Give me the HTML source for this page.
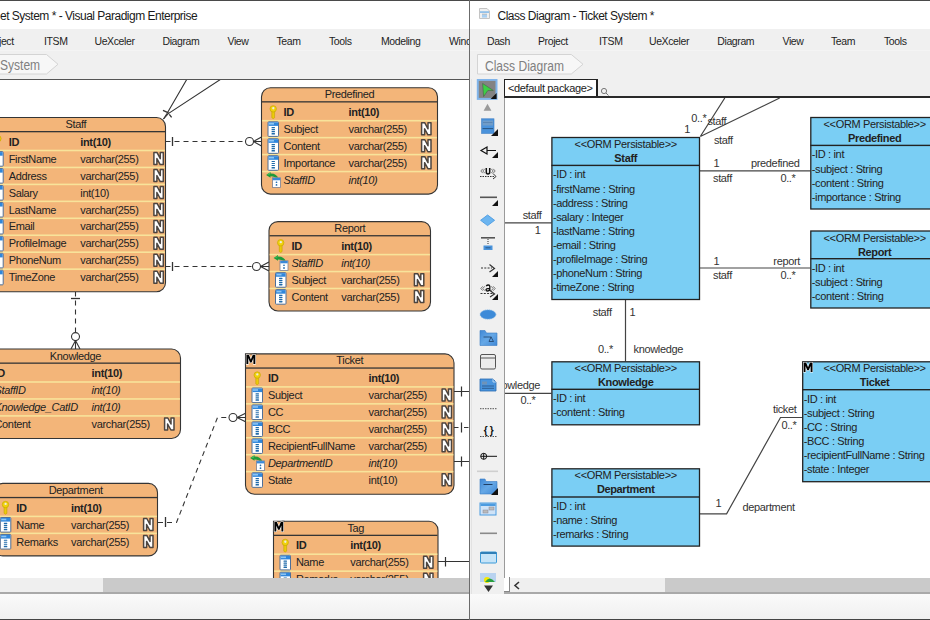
<!DOCTYPE html>
<html><head><meta charset="utf-8"><style>
html,body{margin:0;padding:0;}
body{width:930px;height:620px;overflow:hidden;position:relative;background:#fff;font-family:"Liberation Sans", sans-serif;}
.a{position:absolute;}
.mi{position:absolute;top:34.5px;font-size:10.5px;letter-spacing:-0.4px;color:#1e1e1e;white-space:nowrap;}
svg text{font-family:"Liberation Sans", sans-serif;letter-spacing:-0.35px;}
</style></head><body>

<div class="a" style="left:0;top:0;width:930px;height:1px;background:#4a4a4a"></div>
<div class="a" style="left:0;top:1px;width:469px;height:28px;background:#fff"></div>
<div class="a" style="left:0;top:8.5px;font-size:12px;letter-spacing:-0.5px;color:#1a1a1a;white-space:nowrap">et System * - Visual Paradigm Enterprise</div>
<div class="a" style="left:0;top:29px;width:469px;height:50px;background:#f0f0f0"></div>
<div class="a" style="left:0;top:50px;width:469px;height:1px;background:#f4f4f4"></div>
<div class="mi" style="left:-1px">ject</div>
<div class="mi" style="left:44px">ITSM</div>
<div class="mi" style="left:94.5px">UeXceler</div>
<div class="mi" style="left:162.5px">Diagram</div>
<div class="mi" style="left:227.5px">View</div>
<div class="mi" style="left:276.5px">Team</div>
<div class="mi" style="left:329px">Tools</div>
<div class="mi" style="left:381px">Modeling</div>
<div class="mi" style="left:449px">Window</div>
<svg class="a" style="left:0;top:50px" width="70" height="30"><path d="M-10 4.5 H46.5 L58 14.25 L46.5 24 H-10 Z" fill="#f7f7f7" stroke="#d4d4d4" stroke-width="1"/></svg>
<div class="a" style="left:-0.5px;top:56.5px;font-size:14px;color:#808080;white-space:nowrap;transform:scaleX(0.86);transform-origin:0 0">System</div>
<div class="a" style="left:0;top:79px;width:469px;height:1px;background:#555"></div>
<div class="a" style="left:0;top:578px;width:469px;height:15px;background:#efefef"></div>
<div class="a" style="left:103px;top:578px;width:366px;height:15px;background:#cacaca"></div>
<div class="a" style="left:0;top:592px;width:469px;height:2px;background:#a9a9a9"></div>
<div class="a" style="left:0;top:594px;width:930px;height:25px;background:linear-gradient(#fafafa,#f0f0f0)"></div>
<div class="a" style="left:0;top:619px;width:930px;height:1px;background:#444"></div>
<svg class="a" style="left:0;top:80px" width="469" height="498" viewBox="0 80 469 498">
<g stroke="#333" stroke-width="1.1" fill="none">
<path d="M187 79 L167 113.5 L163.5 119"/><path d="M221.1 79 L168.3 113.6 L163.5 119"/>
<path d="M163 110.3 L168.5 112.8 M169.3 114.3 L171.6 117.4" stroke-width="1.3"/>
<path d="M165.5 141.5 H245.5" stroke-dasharray="5 4"/>
<path d="M172.5 137 V146" stroke-width="1.3"/>
<circle cx="249.5" cy="141.5" r="4" fill="#fff"/>
<path d="M253.5 141.5 L261.5 137 M253.5 141.5 L261.5 146 M253.5 141.5 H261.5"/>
<path d="M165.5 266.5 H252.5" stroke-dasharray="5 4"/>
<path d="M172.5 262 V271" stroke-width="1.3"/>
<circle cx="256.5" cy="266.5" r="4" fill="#fff"/>
<path d="M260.5 266.5 L269 262 M260.5 266.5 L269 271 M260.5 266.5 H269"/>
<path d="M75.5 291.5 V332.5" stroke-dasharray="5 4"/>
<path d="M71 298.5 H80" stroke-width="1.3"/>
<circle cx="75.5" cy="336.6" r="4" fill="#fff"/>
<path d="M75.5 340.6 L71 349 M75.5 340.6 L80 349 M75.5 340.6 V349"/>
<path d="M158 522.5 H176.5 L217.5 417.5 H229" stroke-dasharray="5 4"/>
<path d="M165.5 517 V527" stroke-width="1.3"/>
<circle cx="233" cy="417.5" r="4" fill="#fff"/>
<path d="M237 417.5 L245.5 413.2 M237 417.5 L245.5 421.8 M237 417.5 H245.5"/>
<path d="M454 391.5 H470 M461.5 386.5 V396.5" stroke-width="1.2"/>
<path d="M454 427.5 H458.5 M464 427.5 H468.5 M461.5 422.5 V432.5" stroke-width="1.2"/>
<path d="M454 461.5 H470 M461.5 456.5 V466.5" stroke-width="1.2"/>
<path d="M438 561.5 H470 M445.5 557 V566.5" stroke-width="1.2"/>
</g>
<rect x="-13.8" y="117.5" width="179.3" height="174.20000000000005" rx="9" ry="9" fill="#F3B579" stroke="#353535" stroke-width="1.1"/>
<rect x="-13.3" y="131.0" width="178.3" height="1.3" fill="#353535"/>
<rect x="-13.200000000000001" y="149.7" width="178.10000000000002" height="1.6" fill="#F8E39A"/>
<rect x="-13.200000000000001" y="166.64999999999998" width="178.10000000000002" height="1.6" fill="#F8E39A"/>
<rect x="-13.200000000000001" y="183.6" width="178.10000000000002" height="1.6" fill="#F8E39A"/>
<rect x="-13.200000000000001" y="200.54999999999998" width="178.10000000000002" height="1.6" fill="#F8E39A"/>
<rect x="-13.200000000000001" y="217.5" width="178.10000000000002" height="1.6" fill="#F8E39A"/>
<rect x="-13.200000000000001" y="234.45" width="178.10000000000002" height="1.6" fill="#F8E39A"/>
<rect x="-13.200000000000001" y="251.39999999999998" width="178.10000000000002" height="1.6" fill="#F8E39A"/>
<rect x="-13.200000000000001" y="268.34999999999997" width="178.10000000000002" height="1.6" fill="#F8E39A"/>
<text x="75.85" y="128.0" text-anchor="middle" font-size="11" fill="#222">Staff</text>
<g transform="translate(-5.600000000000001,135.05)"><path d="M2.1 6 V12.4 Q3.5 14.3 4.9 12.4 V6 Z" fill="#EBCB0A" stroke="#C4A000" stroke-width="0.6"/><circle cx="3.5" cy="3.6" r="3.2" fill="#F0D20E" stroke="#C9A800" stroke-width="0.7"/><circle cx="3.6" cy="3.0" r="1.15" fill="#ECECE4"/></g>
<text x="8.7" y="145.7" font-size="11" fill="#222" font-weight="bold">ID</text>
<text x="80.3" y="145.7" font-size="11" fill="#222" font-weight="bold">int(10)</text>
<g transform="translate(-7.800000000000001,151.1)"><rect x="0.5" y="0.5" width="10.5" height="14.6" rx="0.8" fill="#fff" stroke="#4f6f98" stroke-width="1"/><rect x="1" y="1" width="9.5" height="3.6" fill="#2f86db"/><rect x="1.5" y="1.7" width="5" height="1.6" fill="#8cc4f2"/><rect x="4" y="5.7" width="3.5" height="1.2" rx="0.5" fill="#1f6aaa"/><rect x="4" y="7.7" width="3.5" height="1.2" rx="0.5" fill="#1f6aaa"/><rect x="4" y="9.7" width="3.5" height="1.2" rx="0.5" fill="#1f6aaa"/><rect x="4" y="11.7" width="3.5" height="1.6" rx="0.6" fill="#1f6aaa"/></g>
<text x="8.7" y="162.64999999999998" font-size="11" fill="#222">FirstName</text>
<text x="80.3" y="162.64999999999998" font-size="11" fill="#222">varchar(255)</text>
<g transform="translate(153.0,151.7)"><path d="M0.9 12.9 V0.9 H4.1 L7.3 6.9 V0.9 H10.3 V12.9 H7.2 L3.9 6.9 V12.9 Z" fill="#fff" stroke="#4d4540" stroke-width="1.5" stroke-linejoin="round"/></g>
<g transform="translate(-7.800000000000001,168.05)"><rect x="0.5" y="0.5" width="10.5" height="14.6" rx="0.8" fill="#fff" stroke="#4f6f98" stroke-width="1"/><rect x="1" y="1" width="9.5" height="3.6" fill="#2f86db"/><rect x="1.5" y="1.7" width="5" height="1.6" fill="#8cc4f2"/><rect x="4" y="5.7" width="3.5" height="1.2" rx="0.5" fill="#1f6aaa"/><rect x="4" y="7.7" width="3.5" height="1.2" rx="0.5" fill="#1f6aaa"/><rect x="4" y="9.7" width="3.5" height="1.2" rx="0.5" fill="#1f6aaa"/><rect x="4" y="11.7" width="3.5" height="1.6" rx="0.6" fill="#1f6aaa"/></g>
<text x="8.7" y="179.6" font-size="11" fill="#222">Address</text>
<text x="80.3" y="179.6" font-size="11" fill="#222">varchar(255)</text>
<g transform="translate(153.0,168.65)"><path d="M0.9 12.9 V0.9 H4.1 L7.3 6.9 V0.9 H10.3 V12.9 H7.2 L3.9 6.9 V12.9 Z" fill="#fff" stroke="#4d4540" stroke-width="1.5" stroke-linejoin="round"/></g>
<g transform="translate(-7.800000000000001,185.0)"><rect x="0.5" y="0.5" width="10.5" height="14.6" rx="0.8" fill="#fff" stroke="#4f6f98" stroke-width="1"/><rect x="1" y="1" width="9.5" height="3.6" fill="#2f86db"/><rect x="1.5" y="1.7" width="5" height="1.6" fill="#8cc4f2"/><rect x="4" y="5.7" width="3.5" height="1.2" rx="0.5" fill="#1f6aaa"/><rect x="4" y="7.7" width="3.5" height="1.2" rx="0.5" fill="#1f6aaa"/><rect x="4" y="9.7" width="3.5" height="1.2" rx="0.5" fill="#1f6aaa"/><rect x="4" y="11.7" width="3.5" height="1.6" rx="0.6" fill="#1f6aaa"/></g>
<text x="8.7" y="196.54999999999998" font-size="11" fill="#222">Salary</text>
<text x="80.3" y="196.54999999999998" font-size="11" fill="#222">int(10)</text>
<g transform="translate(153.0,185.6)"><path d="M0.9 12.9 V0.9 H4.1 L7.3 6.9 V0.9 H10.3 V12.9 H7.2 L3.9 6.9 V12.9 Z" fill="#fff" stroke="#4d4540" stroke-width="1.5" stroke-linejoin="round"/></g>
<g transform="translate(-7.800000000000001,201.95000000000002)"><rect x="0.5" y="0.5" width="10.5" height="14.6" rx="0.8" fill="#fff" stroke="#4f6f98" stroke-width="1"/><rect x="1" y="1" width="9.5" height="3.6" fill="#2f86db"/><rect x="1.5" y="1.7" width="5" height="1.6" fill="#8cc4f2"/><rect x="4" y="5.7" width="3.5" height="1.2" rx="0.5" fill="#1f6aaa"/><rect x="4" y="7.7" width="3.5" height="1.2" rx="0.5" fill="#1f6aaa"/><rect x="4" y="9.7" width="3.5" height="1.2" rx="0.5" fill="#1f6aaa"/><rect x="4" y="11.7" width="3.5" height="1.6" rx="0.6" fill="#1f6aaa"/></g>
<text x="8.7" y="213.5" font-size="11" fill="#222">LastName</text>
<text x="80.3" y="213.5" font-size="11" fill="#222">varchar(255)</text>
<g transform="translate(153.0,202.55)"><path d="M0.9 12.9 V0.9 H4.1 L7.3 6.9 V0.9 H10.3 V12.9 H7.2 L3.9 6.9 V12.9 Z" fill="#fff" stroke="#4d4540" stroke-width="1.5" stroke-linejoin="round"/></g>
<g transform="translate(-7.800000000000001,218.9)"><rect x="0.5" y="0.5" width="10.5" height="14.6" rx="0.8" fill="#fff" stroke="#4f6f98" stroke-width="1"/><rect x="1" y="1" width="9.5" height="3.6" fill="#2f86db"/><rect x="1.5" y="1.7" width="5" height="1.6" fill="#8cc4f2"/><rect x="4" y="5.7" width="3.5" height="1.2" rx="0.5" fill="#1f6aaa"/><rect x="4" y="7.7" width="3.5" height="1.2" rx="0.5" fill="#1f6aaa"/><rect x="4" y="9.7" width="3.5" height="1.2" rx="0.5" fill="#1f6aaa"/><rect x="4" y="11.7" width="3.5" height="1.6" rx="0.6" fill="#1f6aaa"/></g>
<text x="8.7" y="230.45" font-size="11" fill="#222">Email</text>
<text x="80.3" y="230.45" font-size="11" fill="#222">varchar(255)</text>
<g transform="translate(153.0,219.5)"><path d="M0.9 12.9 V0.9 H4.1 L7.3 6.9 V0.9 H10.3 V12.9 H7.2 L3.9 6.9 V12.9 Z" fill="#fff" stroke="#4d4540" stroke-width="1.5" stroke-linejoin="round"/></g>
<g transform="translate(-7.800000000000001,235.85)"><rect x="0.5" y="0.5" width="10.5" height="14.6" rx="0.8" fill="#fff" stroke="#4f6f98" stroke-width="1"/><rect x="1" y="1" width="9.5" height="3.6" fill="#2f86db"/><rect x="1.5" y="1.7" width="5" height="1.6" fill="#8cc4f2"/><rect x="4" y="5.7" width="3.5" height="1.2" rx="0.5" fill="#1f6aaa"/><rect x="4" y="7.7" width="3.5" height="1.2" rx="0.5" fill="#1f6aaa"/><rect x="4" y="9.7" width="3.5" height="1.2" rx="0.5" fill="#1f6aaa"/><rect x="4" y="11.7" width="3.5" height="1.6" rx="0.6" fill="#1f6aaa"/></g>
<text x="8.7" y="247.39999999999998" font-size="11" fill="#222">ProfileImage</text>
<text x="80.3" y="247.39999999999998" font-size="11" fill="#222">varchar(255)</text>
<g transform="translate(153.0,236.45)"><path d="M0.9 12.9 V0.9 H4.1 L7.3 6.9 V0.9 H10.3 V12.9 H7.2 L3.9 6.9 V12.9 Z" fill="#fff" stroke="#4d4540" stroke-width="1.5" stroke-linejoin="round"/></g>
<g transform="translate(-7.800000000000001,252.79999999999998)"><rect x="0.5" y="0.5" width="10.5" height="14.6" rx="0.8" fill="#fff" stroke="#4f6f98" stroke-width="1"/><rect x="1" y="1" width="9.5" height="3.6" fill="#2f86db"/><rect x="1.5" y="1.7" width="5" height="1.6" fill="#8cc4f2"/><rect x="4" y="5.7" width="3.5" height="1.2" rx="0.5" fill="#1f6aaa"/><rect x="4" y="7.7" width="3.5" height="1.2" rx="0.5" fill="#1f6aaa"/><rect x="4" y="9.7" width="3.5" height="1.2" rx="0.5" fill="#1f6aaa"/><rect x="4" y="11.7" width="3.5" height="1.6" rx="0.6" fill="#1f6aaa"/></g>
<text x="8.7" y="264.34999999999997" font-size="11" fill="#222">PhoneNum</text>
<text x="80.3" y="264.34999999999997" font-size="11" fill="#222">varchar(255)</text>
<g transform="translate(153.0,253.39999999999998)"><path d="M0.9 12.9 V0.9 H4.1 L7.3 6.9 V0.9 H10.3 V12.9 H7.2 L3.9 6.9 V12.9 Z" fill="#fff" stroke="#4d4540" stroke-width="1.5" stroke-linejoin="round"/></g>
<g transform="translate(-7.800000000000001,269.75000000000006)"><rect x="0.5" y="0.5" width="10.5" height="14.6" rx="0.8" fill="#fff" stroke="#4f6f98" stroke-width="1"/><rect x="1" y="1" width="9.5" height="3.6" fill="#2f86db"/><rect x="1.5" y="1.7" width="5" height="1.6" fill="#8cc4f2"/><rect x="4" y="5.7" width="3.5" height="1.2" rx="0.5" fill="#1f6aaa"/><rect x="4" y="7.7" width="3.5" height="1.2" rx="0.5" fill="#1f6aaa"/><rect x="4" y="9.7" width="3.5" height="1.2" rx="0.5" fill="#1f6aaa"/><rect x="4" y="11.7" width="3.5" height="1.6" rx="0.6" fill="#1f6aaa"/></g>
<text x="8.7" y="281.3" font-size="11" fill="#222">TimeZone</text>
<text x="80.3" y="281.3" font-size="11" fill="#222">varchar(255)</text>
<g transform="translate(153.0,270.35)"><path d="M0.9 12.9 V0.9 H4.1 L7.3 6.9 V0.9 H10.3 V12.9 H7.2 L3.9 6.9 V12.9 Z" fill="#fff" stroke="#4d4540" stroke-width="1.5" stroke-linejoin="round"/></g>
<rect x="261.5" y="87.7" width="176.0" height="106.39999999999999" rx="9" ry="9" fill="#F3B579" stroke="#353535" stroke-width="1.1"/>
<rect x="262.0" y="101.2" width="175.0" height="1.3" fill="#353535"/>
<rect x="262.1" y="119.9" width="174.8" height="1.6" fill="#F8E39A"/>
<rect x="262.1" y="136.85" width="174.8" height="1.6" fill="#F8E39A"/>
<rect x="262.1" y="153.79999999999998" width="174.8" height="1.6" fill="#F8E39A"/>
<rect x="262.1" y="170.75" width="174.8" height="1.6" fill="#F8E39A"/>
<text x="349.5" y="98.2" text-anchor="middle" font-size="11" fill="#222">Predefined</text>
<g transform="translate(269.7,105.25)"><path d="M2.1 6 V12.4 Q3.5 14.3 4.9 12.4 V6 Z" fill="#EBCB0A" stroke="#C4A000" stroke-width="0.6"/><circle cx="3.5" cy="3.6" r="3.2" fill="#F0D20E" stroke="#C9A800" stroke-width="0.7"/><circle cx="3.6" cy="3.0" r="1.15" fill="#ECECE4"/></g>
<text x="283.6" y="115.9" font-size="11" fill="#222" font-weight="bold">ID</text>
<text x="348.6" y="115.9" font-size="11" fill="#222" font-weight="bold">int(10)</text>
<g transform="translate(267.5,121.3)"><rect x="0.5" y="0.5" width="10.5" height="14.6" rx="0.8" fill="#fff" stroke="#4f6f98" stroke-width="1"/><rect x="1" y="1" width="9.5" height="3.6" fill="#2f86db"/><rect x="1.5" y="1.7" width="5" height="1.6" fill="#8cc4f2"/><rect x="4" y="5.7" width="3.5" height="1.2" rx="0.5" fill="#1f6aaa"/><rect x="4" y="7.7" width="3.5" height="1.2" rx="0.5" fill="#1f6aaa"/><rect x="4" y="9.7" width="3.5" height="1.2" rx="0.5" fill="#1f6aaa"/><rect x="4" y="11.7" width="3.5" height="1.6" rx="0.6" fill="#1f6aaa"/></g>
<text x="283.6" y="132.85" font-size="11" fill="#222">Subject</text>
<text x="348.6" y="132.85" font-size="11" fill="#222">varchar(255)</text>
<g transform="translate(420.7,121.9)"><path d="M0.9 12.9 V0.9 H4.1 L7.3 6.9 V0.9 H10.3 V12.9 H7.2 L3.9 6.9 V12.9 Z" fill="#fff" stroke="#4d4540" stroke-width="1.5" stroke-linejoin="round"/></g>
<g transform="translate(267.5,138.25)"><rect x="0.5" y="0.5" width="10.5" height="14.6" rx="0.8" fill="#fff" stroke="#4f6f98" stroke-width="1"/><rect x="1" y="1" width="9.5" height="3.6" fill="#2f86db"/><rect x="1.5" y="1.7" width="5" height="1.6" fill="#8cc4f2"/><rect x="4" y="5.7" width="3.5" height="1.2" rx="0.5" fill="#1f6aaa"/><rect x="4" y="7.7" width="3.5" height="1.2" rx="0.5" fill="#1f6aaa"/><rect x="4" y="9.7" width="3.5" height="1.2" rx="0.5" fill="#1f6aaa"/><rect x="4" y="11.7" width="3.5" height="1.6" rx="0.6" fill="#1f6aaa"/></g>
<text x="283.6" y="149.79999999999998" font-size="11" fill="#222">Content</text>
<text x="348.6" y="149.79999999999998" font-size="11" fill="#222">varchar(255)</text>
<g transform="translate(420.7,138.85)"><path d="M0.9 12.9 V0.9 H4.1 L7.3 6.9 V0.9 H10.3 V12.9 H7.2 L3.9 6.9 V12.9 Z" fill="#fff" stroke="#4d4540" stroke-width="1.5" stroke-linejoin="round"/></g>
<g transform="translate(267.5,155.20000000000002)"><rect x="0.5" y="0.5" width="10.5" height="14.6" rx="0.8" fill="#fff" stroke="#4f6f98" stroke-width="1"/><rect x="1" y="1" width="9.5" height="3.6" fill="#2f86db"/><rect x="1.5" y="1.7" width="5" height="1.6" fill="#8cc4f2"/><rect x="4" y="5.7" width="3.5" height="1.2" rx="0.5" fill="#1f6aaa"/><rect x="4" y="7.7" width="3.5" height="1.2" rx="0.5" fill="#1f6aaa"/><rect x="4" y="9.7" width="3.5" height="1.2" rx="0.5" fill="#1f6aaa"/><rect x="4" y="11.7" width="3.5" height="1.6" rx="0.6" fill="#1f6aaa"/></g>
<text x="283.6" y="166.75" font-size="11" fill="#222">Importance</text>
<text x="348.6" y="166.75" font-size="11" fill="#222">varchar(255)</text>
<g transform="translate(420.7,155.8)"><path d="M0.9 12.9 V0.9 H4.1 L7.3 6.9 V0.9 H10.3 V12.9 H7.2 L3.9 6.9 V12.9 Z" fill="#fff" stroke="#4d4540" stroke-width="1.5" stroke-linejoin="round"/></g>
<g transform="translate(266.0,173.05)"><path d="M0.1 1.9 L4.5 -1.1 L4.5 0.4 Q10.8 0.2 12.6 5.9 L10.5 5.9 Q9.2 3.4 4.5 3.3 L4.5 4.6 Z" fill="#1f9a3a"/><path d="M1 1.9 L4 -0.2 V1.2" fill="#4fd06a"/><rect x="6.5" y="4.7" width="8" height="9.7" fill="#fff" stroke="#7a7f92" stroke-width="0.8"/><rect x="6.8" y="4.9" width="7.4" height="2.3" fill="#3a88d8"/><rect x="9.7" y="8.4" width="1.6" height="1.6" rx="0.6" fill="#2a72b4"/><rect x="9.7" y="11" width="1.6" height="1.8" rx="0.6" fill="#2a72b4"/></g>
<text x="283.6" y="183.7" font-size="11" fill="#222" font-style="italic">StaffID</text>
<text x="348.6" y="183.7" font-size="11" fill="#222" font-style="italic">int(10)</text>
<rect x="269" y="221.6" width="161.5" height="89.45000000000002" rx="9" ry="9" fill="#F3B579" stroke="#353535" stroke-width="1.1"/>
<rect x="269.5" y="235.1" width="160.5" height="1.3" fill="#353535"/>
<rect x="269.6" y="253.79999999999998" width="160.3" height="1.6" fill="#F8E39A"/>
<rect x="269.6" y="270.75" width="160.3" height="1.6" fill="#F8E39A"/>
<rect x="269.6" y="287.7" width="160.3" height="1.6" fill="#F8E39A"/>
<text x="349.75" y="232.1" text-anchor="middle" font-size="11" fill="#222">Report</text>
<g transform="translate(277.2,239.15)"><path d="M2.1 6 V12.4 Q3.5 14.3 4.9 12.4 V6 Z" fill="#EBCB0A" stroke="#C4A000" stroke-width="0.6"/><circle cx="3.5" cy="3.6" r="3.2" fill="#F0D20E" stroke="#C9A800" stroke-width="0.7"/><circle cx="3.6" cy="3.0" r="1.15" fill="#ECECE4"/></g>
<text x="291.6" y="249.79999999999998" font-size="11" fill="#222" font-weight="bold">ID</text>
<text x="341.3" y="249.79999999999998" font-size="11" fill="#222" font-weight="bold">int(10)</text>
<g transform="translate(273.5,256.1)"><path d="M0.1 1.9 L4.5 -1.1 L4.5 0.4 Q10.8 0.2 12.6 5.9 L10.5 5.9 Q9.2 3.4 4.5 3.3 L4.5 4.6 Z" fill="#1f9a3a"/><path d="M1 1.9 L4 -0.2 V1.2" fill="#4fd06a"/><rect x="6.5" y="4.7" width="8" height="9.7" fill="#fff" stroke="#7a7f92" stroke-width="0.8"/><rect x="6.8" y="4.9" width="7.4" height="2.3" fill="#3a88d8"/><rect x="9.7" y="8.4" width="1.6" height="1.6" rx="0.6" fill="#2a72b4"/><rect x="9.7" y="11" width="1.6" height="1.8" rx="0.6" fill="#2a72b4"/></g>
<text x="291.6" y="266.75" font-size="11" fill="#222" font-style="italic">StaffID</text>
<text x="341.3" y="266.75" font-size="11" fill="#222" font-style="italic">int(10)</text>
<g transform="translate(275.0,272.15000000000003)"><rect x="0.5" y="0.5" width="10.5" height="14.6" rx="0.8" fill="#fff" stroke="#4f6f98" stroke-width="1"/><rect x="1" y="1" width="9.5" height="3.6" fill="#2f86db"/><rect x="1.5" y="1.7" width="5" height="1.6" fill="#8cc4f2"/><rect x="4" y="5.7" width="3.5" height="1.2" rx="0.5" fill="#1f6aaa"/><rect x="4" y="7.7" width="3.5" height="1.2" rx="0.5" fill="#1f6aaa"/><rect x="4" y="9.7" width="3.5" height="1.2" rx="0.5" fill="#1f6aaa"/><rect x="4" y="11.7" width="3.5" height="1.6" rx="0.6" fill="#1f6aaa"/></g>
<text x="291.6" y="283.7" font-size="11" fill="#222">Subject</text>
<text x="341.3" y="283.7" font-size="11" fill="#222">varchar(255)</text>
<g transform="translate(413.5,272.75)"><path d="M0.9 12.9 V0.9 H4.1 L7.3 6.9 V0.9 H10.3 V12.9 H7.2 L3.9 6.9 V12.9 Z" fill="#fff" stroke="#4d4540" stroke-width="1.5" stroke-linejoin="round"/></g>
<g transform="translate(275.0,289.1)"><rect x="0.5" y="0.5" width="10.5" height="14.6" rx="0.8" fill="#fff" stroke="#4f6f98" stroke-width="1"/><rect x="1" y="1" width="9.5" height="3.6" fill="#2f86db"/><rect x="1.5" y="1.7" width="5" height="1.6" fill="#8cc4f2"/><rect x="4" y="5.7" width="3.5" height="1.2" rx="0.5" fill="#1f6aaa"/><rect x="4" y="7.7" width="3.5" height="1.2" rx="0.5" fill="#1f6aaa"/><rect x="4" y="9.7" width="3.5" height="1.2" rx="0.5" fill="#1f6aaa"/><rect x="4" y="11.7" width="3.5" height="1.6" rx="0.6" fill="#1f6aaa"/></g>
<text x="291.6" y="300.65" font-size="11" fill="#222">Content</text>
<text x="341.3" y="300.65" font-size="11" fill="#222">varchar(255)</text>
<g transform="translate(413.5,289.7)"><path d="M0.9 12.9 V0.9 H4.1 L7.3 6.9 V0.9 H10.3 V12.9 H7.2 L3.9 6.9 V12.9 Z" fill="#fff" stroke="#4d4540" stroke-width="1.5" stroke-linejoin="round"/></g>
<rect x="-29.5" y="349" width="210.0" height="89.45000000000005" rx="9" ry="9" fill="#F3B579" stroke="#353535" stroke-width="1.1"/>
<rect x="-29.0" y="362.5" width="209.0" height="1.3" fill="#353535"/>
<rect x="-28.9" y="381.2" width="208.8" height="1.6" fill="#F8E39A"/>
<rect x="-28.9" y="398.15" width="208.8" height="1.6" fill="#F8E39A"/>
<rect x="-28.9" y="415.09999999999997" width="208.8" height="1.6" fill="#F8E39A"/>
<text x="75.5" y="359.5" text-anchor="middle" font-size="11" fill="#222">Knowledge</text>
<g transform="translate(-21.3,366.55)"><path d="M2.1 6 V12.4 Q3.5 14.3 4.9 12.4 V6 Z" fill="#EBCB0A" stroke="#C4A000" stroke-width="0.6"/><circle cx="3.5" cy="3.6" r="3.2" fill="#F0D20E" stroke="#C9A800" stroke-width="0.7"/><circle cx="3.6" cy="3.0" r="1.15" fill="#ECECE4"/></g>
<text x="-5.5" y="377.2" font-size="11" fill="#222" font-weight="bold">ID</text>
<text x="91.6" y="377.2" font-size="11" fill="#222" font-weight="bold">int(10)</text>
<g transform="translate(-25.0,383.5)"><path d="M0.1 1.9 L4.5 -1.1 L4.5 0.4 Q10.8 0.2 12.6 5.9 L10.5 5.9 Q9.2 3.4 4.5 3.3 L4.5 4.6 Z" fill="#1f9a3a"/><path d="M1 1.9 L4 -0.2 V1.2" fill="#4fd06a"/><rect x="6.5" y="4.7" width="8" height="9.7" fill="#fff" stroke="#7a7f92" stroke-width="0.8"/><rect x="6.8" y="4.9" width="7.4" height="2.3" fill="#3a88d8"/><rect x="9.7" y="8.4" width="1.6" height="1.6" rx="0.6" fill="#2a72b4"/><rect x="9.7" y="11" width="1.6" height="1.8" rx="0.6" fill="#2a72b4"/></g>
<text x="-5.5" y="394.15" font-size="11" fill="#222" font-style="italic">StaffID</text>
<text x="91.6" y="394.15" font-size="11" fill="#222" font-style="italic">int(10)</text>
<g transform="translate(-25.0,400.45)"><path d="M0.1 1.9 L4.5 -1.1 L4.5 0.4 Q10.8 0.2 12.6 5.9 L10.5 5.9 Q9.2 3.4 4.5 3.3 L4.5 4.6 Z" fill="#1f9a3a"/><path d="M1 1.9 L4 -0.2 V1.2" fill="#4fd06a"/><rect x="6.5" y="4.7" width="8" height="9.7" fill="#fff" stroke="#7a7f92" stroke-width="0.8"/><rect x="6.8" y="4.9" width="7.4" height="2.3" fill="#3a88d8"/><rect x="9.7" y="8.4" width="1.6" height="1.6" rx="0.6" fill="#2a72b4"/><rect x="9.7" y="11" width="1.6" height="1.8" rx="0.6" fill="#2a72b4"/></g>
<text x="-5.5" y="411.09999999999997" font-size="11" fill="#222" font-style="italic">Knowledge_CatID</text>
<text x="91.6" y="411.09999999999997" font-size="11" fill="#222" font-style="italic">int(10)</text>
<g transform="translate(-23.5,416.50000000000006)"><rect x="0.5" y="0.5" width="10.5" height="14.6" rx="0.8" fill="#fff" stroke="#4f6f98" stroke-width="1"/><rect x="1" y="1" width="9.5" height="3.6" fill="#2f86db"/><rect x="1.5" y="1.7" width="5" height="1.6" fill="#8cc4f2"/><rect x="4" y="5.7" width="3.5" height="1.2" rx="0.5" fill="#1f6aaa"/><rect x="4" y="7.7" width="3.5" height="1.2" rx="0.5" fill="#1f6aaa"/><rect x="4" y="9.7" width="3.5" height="1.2" rx="0.5" fill="#1f6aaa"/><rect x="4" y="11.7" width="3.5" height="1.6" rx="0.6" fill="#1f6aaa"/></g>
<text x="-5.5" y="428.05" font-size="11" fill="#222">Content</text>
<text x="91.6" y="428.05" font-size="11" fill="#222">varchar(255)</text>
<g transform="translate(163.7,417.1)"><path d="M0.9 12.9 V0.9 H4.1 L7.3 6.9 V0.9 H10.3 V12.9 H7.2 L3.9 6.9 V12.9 Z" fill="#fff" stroke="#4d4540" stroke-width="1.5" stroke-linejoin="round"/></g>
<rect x="245.5" y="353.9" width="208.5" height="140.3" rx="9" ry="9" fill="#F3B579" stroke="#353535" stroke-width="1.1"/>
<rect x="246.0" y="367.4" width="207.5" height="1.3" fill="#353535"/>
<rect x="246.1" y="386.09999999999997" width="207.3" height="1.6" fill="#F8E39A"/>
<rect x="246.1" y="403.04999999999995" width="207.3" height="1.6" fill="#F8E39A"/>
<rect x="246.1" y="419.99999999999994" width="207.3" height="1.6" fill="#F8E39A"/>
<rect x="246.1" y="436.95" width="207.3" height="1.6" fill="#F8E39A"/>
<rect x="246.1" y="453.9" width="207.3" height="1.6" fill="#F8E39A"/>
<rect x="246.1" y="470.84999999999997" width="207.3" height="1.6" fill="#F8E39A"/>
<text x="349.75" y="364.4" text-anchor="middle" font-size="11" fill="#222">Ticket</text>
<g transform="translate(253.7,371.45)"><path d="M2.1 6 V12.4 Q3.5 14.3 4.9 12.4 V6 Z" fill="#EBCB0A" stroke="#C4A000" stroke-width="0.6"/><circle cx="3.5" cy="3.6" r="3.2" fill="#F0D20E" stroke="#C9A800" stroke-width="0.7"/><circle cx="3.6" cy="3.0" r="1.15" fill="#ECECE4"/></g>
<text x="268" y="382.09999999999997" font-size="11" fill="#222" font-weight="bold">ID</text>
<text x="368.6" y="382.09999999999997" font-size="11" fill="#222" font-weight="bold">int(10)</text>
<g transform="translate(251.5,387.5)"><rect x="0.5" y="0.5" width="10.5" height="14.6" rx="0.8" fill="#fff" stroke="#4f6f98" stroke-width="1"/><rect x="1" y="1" width="9.5" height="3.6" fill="#2f86db"/><rect x="1.5" y="1.7" width="5" height="1.6" fill="#8cc4f2"/><rect x="4" y="5.7" width="3.5" height="1.2" rx="0.5" fill="#1f6aaa"/><rect x="4" y="7.7" width="3.5" height="1.2" rx="0.5" fill="#1f6aaa"/><rect x="4" y="9.7" width="3.5" height="1.2" rx="0.5" fill="#1f6aaa"/><rect x="4" y="11.7" width="3.5" height="1.6" rx="0.6" fill="#1f6aaa"/></g>
<text x="268" y="399.04999999999995" font-size="11" fill="#222">Subject</text>
<text x="368.6" y="399.04999999999995" font-size="11" fill="#222">varchar(255)</text>
<g transform="translate(441.2,388.09999999999997)"><path d="M0.9 12.9 V0.9 H4.1 L7.3 6.9 V0.9 H10.3 V12.9 H7.2 L3.9 6.9 V12.9 Z" fill="#fff" stroke="#4d4540" stroke-width="1.5" stroke-linejoin="round"/></g>
<g transform="translate(251.5,404.45)"><rect x="0.5" y="0.5" width="10.5" height="14.6" rx="0.8" fill="#fff" stroke="#4f6f98" stroke-width="1"/><rect x="1" y="1" width="9.5" height="3.6" fill="#2f86db"/><rect x="1.5" y="1.7" width="5" height="1.6" fill="#8cc4f2"/><rect x="4" y="5.7" width="3.5" height="1.2" rx="0.5" fill="#1f6aaa"/><rect x="4" y="7.7" width="3.5" height="1.2" rx="0.5" fill="#1f6aaa"/><rect x="4" y="9.7" width="3.5" height="1.2" rx="0.5" fill="#1f6aaa"/><rect x="4" y="11.7" width="3.5" height="1.6" rx="0.6" fill="#1f6aaa"/></g>
<text x="268" y="415.99999999999994" font-size="11" fill="#222">CC</text>
<text x="368.6" y="415.99999999999994" font-size="11" fill="#222">varchar(255)</text>
<g transform="translate(441.2,405.04999999999995)"><path d="M0.9 12.9 V0.9 H4.1 L7.3 6.9 V0.9 H10.3 V12.9 H7.2 L3.9 6.9 V12.9 Z" fill="#fff" stroke="#4d4540" stroke-width="1.5" stroke-linejoin="round"/></g>
<g transform="translate(251.5,421.40000000000003)"><rect x="0.5" y="0.5" width="10.5" height="14.6" rx="0.8" fill="#fff" stroke="#4f6f98" stroke-width="1"/><rect x="1" y="1" width="9.5" height="3.6" fill="#2f86db"/><rect x="1.5" y="1.7" width="5" height="1.6" fill="#8cc4f2"/><rect x="4" y="5.7" width="3.5" height="1.2" rx="0.5" fill="#1f6aaa"/><rect x="4" y="7.7" width="3.5" height="1.2" rx="0.5" fill="#1f6aaa"/><rect x="4" y="9.7" width="3.5" height="1.2" rx="0.5" fill="#1f6aaa"/><rect x="4" y="11.7" width="3.5" height="1.6" rx="0.6" fill="#1f6aaa"/></g>
<text x="268" y="432.95" font-size="11" fill="#222">BCC</text>
<text x="368.6" y="432.95" font-size="11" fill="#222">varchar(255)</text>
<g transform="translate(441.2,422.0)"><path d="M0.9 12.9 V0.9 H4.1 L7.3 6.9 V0.9 H10.3 V12.9 H7.2 L3.9 6.9 V12.9 Z" fill="#fff" stroke="#4d4540" stroke-width="1.5" stroke-linejoin="round"/></g>
<g transform="translate(251.5,438.35)"><rect x="0.5" y="0.5" width="10.5" height="14.6" rx="0.8" fill="#fff" stroke="#4f6f98" stroke-width="1"/><rect x="1" y="1" width="9.5" height="3.6" fill="#2f86db"/><rect x="1.5" y="1.7" width="5" height="1.6" fill="#8cc4f2"/><rect x="4" y="5.7" width="3.5" height="1.2" rx="0.5" fill="#1f6aaa"/><rect x="4" y="7.7" width="3.5" height="1.2" rx="0.5" fill="#1f6aaa"/><rect x="4" y="9.7" width="3.5" height="1.2" rx="0.5" fill="#1f6aaa"/><rect x="4" y="11.7" width="3.5" height="1.6" rx="0.6" fill="#1f6aaa"/></g>
<text x="268" y="449.9" font-size="11" fill="#222">RecipientFullName</text>
<text x="368.6" y="449.9" font-size="11" fill="#222">varchar(255)</text>
<g transform="translate(441.2,438.95)"><path d="M0.9 12.9 V0.9 H4.1 L7.3 6.9 V0.9 H10.3 V12.9 H7.2 L3.9 6.9 V12.9 Z" fill="#fff" stroke="#4d4540" stroke-width="1.5" stroke-linejoin="round"/></g>
<g transform="translate(250.0,456.2)"><path d="M0.1 1.9 L4.5 -1.1 L4.5 0.4 Q10.8 0.2 12.6 5.9 L10.5 5.9 Q9.2 3.4 4.5 3.3 L4.5 4.6 Z" fill="#1f9a3a"/><path d="M1 1.9 L4 -0.2 V1.2" fill="#4fd06a"/><rect x="6.5" y="4.7" width="8" height="9.7" fill="#fff" stroke="#7a7f92" stroke-width="0.8"/><rect x="6.8" y="4.9" width="7.4" height="2.3" fill="#3a88d8"/><rect x="9.7" y="8.4" width="1.6" height="1.6" rx="0.6" fill="#2a72b4"/><rect x="9.7" y="11" width="1.6" height="1.8" rx="0.6" fill="#2a72b4"/></g>
<text x="268" y="466.84999999999997" font-size="11" fill="#222" font-style="italic">DepartmentID</text>
<text x="368.6" y="466.84999999999997" font-size="11" fill="#222" font-style="italic">int(10)</text>
<g transform="translate(251.5,472.25)"><rect x="0.5" y="0.5" width="10.5" height="14.6" rx="0.8" fill="#fff" stroke="#4f6f98" stroke-width="1"/><rect x="1" y="1" width="9.5" height="3.6" fill="#2f86db"/><rect x="1.5" y="1.7" width="5" height="1.6" fill="#8cc4f2"/><rect x="4" y="5.7" width="3.5" height="1.2" rx="0.5" fill="#1f6aaa"/><rect x="4" y="7.7" width="3.5" height="1.2" rx="0.5" fill="#1f6aaa"/><rect x="4" y="9.7" width="3.5" height="1.2" rx="0.5" fill="#1f6aaa"/><rect x="4" y="11.7" width="3.5" height="1.6" rx="0.6" fill="#1f6aaa"/></g>
<text x="268" y="483.79999999999995" font-size="11" fill="#222">State</text>
<text x="368.6" y="483.79999999999995" font-size="11" fill="#222">int(10)</text>
<g transform="translate(441.2,472.84999999999997)"><path d="M0.9 12.9 V0.9 H4.1 L7.3 6.9 V0.9 H10.3 V12.9 H7.2 L3.9 6.9 V12.9 Z" fill="#fff" stroke="#4d4540" stroke-width="1.5" stroke-linejoin="round"/></g>
<rect x="245.5" y="353.9" width="10" height="10" fill="#F3B579"/><path d="M245.5 364.9 V353.9 H256.5" fill="none" stroke="#353535" stroke-width="1.1"/>
<path transform="translate(246.1,354.5)" d="M0.3 9.6 V0.3 H2.8 L4.75 4.9 L6.7 0.3 H9.2 V9.6 H7.3 V3.6 L5.5 7.9 H4 L2.2 3.6 V9.6 Z" fill="#000" stroke="#fff" stroke-width="1.1" stroke-linejoin="round" paint-order="stroke"/>
<rect x="-6.2" y="483.4" width="163.7" height="72.5" rx="9" ry="9" fill="#F3B579" stroke="#353535" stroke-width="1.1"/>
<rect x="-5.7" y="496.9" width="162.7" height="1.3" fill="#353535"/>
<rect x="-5.6000000000000005" y="515.6" width="162.5" height="1.6" fill="#F8E39A"/>
<rect x="-5.6000000000000005" y="532.5500000000001" width="162.5" height="1.6" fill="#F8E39A"/>
<text x="75.65" y="493.9" text-anchor="middle" font-size="11" fill="#222">Department</text>
<g transform="translate(1.9999999999999991,500.95)"><path d="M2.1 6 V12.4 Q3.5 14.3 4.9 12.4 V6 Z" fill="#EBCB0A" stroke="#C4A000" stroke-width="0.6"/><circle cx="3.5" cy="3.6" r="3.2" fill="#F0D20E" stroke="#C9A800" stroke-width="0.7"/><circle cx="3.6" cy="3.0" r="1.15" fill="#ECECE4"/></g>
<text x="16.3" y="511.59999999999997" font-size="11" fill="#222" font-weight="bold">ID</text>
<text x="71" y="511.59999999999997" font-size="11" fill="#222" font-weight="bold">int(10)</text>
<g transform="translate(-0.20000000000000018,517.0)"><rect x="0.5" y="0.5" width="10.5" height="14.6" rx="0.8" fill="#fff" stroke="#4f6f98" stroke-width="1"/><rect x="1" y="1" width="9.5" height="3.6" fill="#2f86db"/><rect x="1.5" y="1.7" width="5" height="1.6" fill="#8cc4f2"/><rect x="4" y="5.7" width="3.5" height="1.2" rx="0.5" fill="#1f6aaa"/><rect x="4" y="7.7" width="3.5" height="1.2" rx="0.5" fill="#1f6aaa"/><rect x="4" y="9.7" width="3.5" height="1.2" rx="0.5" fill="#1f6aaa"/><rect x="4" y="11.7" width="3.5" height="1.6" rx="0.6" fill="#1f6aaa"/></g>
<text x="16.3" y="528.5500000000001" font-size="11" fill="#222">Name</text>
<text x="71" y="528.5500000000001" font-size="11" fill="#222">varchar(255)</text>
<g transform="translate(142.7,517.6)"><path d="M0.9 12.9 V0.9 H4.1 L7.3 6.9 V0.9 H10.3 V12.9 H7.2 L3.9 6.9 V12.9 Z" fill="#fff" stroke="#4d4540" stroke-width="1.5" stroke-linejoin="round"/></g>
<g transform="translate(-0.20000000000000018,533.9499999999999)"><rect x="0.5" y="0.5" width="10.5" height="14.6" rx="0.8" fill="#fff" stroke="#4f6f98" stroke-width="1"/><rect x="1" y="1" width="9.5" height="3.6" fill="#2f86db"/><rect x="1.5" y="1.7" width="5" height="1.6" fill="#8cc4f2"/><rect x="4" y="5.7" width="3.5" height="1.2" rx="0.5" fill="#1f6aaa"/><rect x="4" y="7.7" width="3.5" height="1.2" rx="0.5" fill="#1f6aaa"/><rect x="4" y="9.7" width="3.5" height="1.2" rx="0.5" fill="#1f6aaa"/><rect x="4" y="11.7" width="3.5" height="1.6" rx="0.6" fill="#1f6aaa"/></g>
<text x="16.3" y="545.5" font-size="11" fill="#222">Remarks</text>
<text x="71" y="545.5" font-size="11" fill="#222">varchar(255)</text>
<g transform="translate(142.7,534.55)"><path d="M0.9 12.9 V0.9 H4.1 L7.3 6.9 V0.9 H10.3 V12.9 H7.2 L3.9 6.9 V12.9 Z" fill="#fff" stroke="#4d4540" stroke-width="1.5" stroke-linejoin="round"/></g>
<rect x="273.5" y="521.2" width="164.5" height="72.5" rx="9" ry="9" fill="#F3B579" stroke="#353535" stroke-width="1.1"/>
<rect x="274.0" y="534.7" width="163.5" height="1.3" fill="#353535"/>
<rect x="274.1" y="553.4000000000001" width="163.3" height="1.6" fill="#F8E39A"/>
<rect x="274.1" y="570.3500000000001" width="163.3" height="1.6" fill="#F8E39A"/>
<text x="355.75" y="531.7" text-anchor="middle" font-size="11" fill="#222">Tag</text>
<g transform="translate(281.7,538.75)"><path d="M2.1 6 V12.4 Q3.5 14.3 4.9 12.4 V6 Z" fill="#EBCB0A" stroke="#C4A000" stroke-width="0.6"/><circle cx="3.5" cy="3.6" r="3.2" fill="#F0D20E" stroke="#C9A800" stroke-width="0.7"/><circle cx="3.6" cy="3.0" r="1.15" fill="#ECECE4"/></g>
<text x="296" y="549.4000000000001" font-size="11" fill="#222" font-weight="bold">ID</text>
<text x="350.3" y="549.4000000000001" font-size="11" fill="#222" font-weight="bold">int(10)</text>
<g transform="translate(279.5,554.8000000000001)"><rect x="0.5" y="0.5" width="10.5" height="14.6" rx="0.8" fill="#fff" stroke="#4f6f98" stroke-width="1"/><rect x="1" y="1" width="9.5" height="3.6" fill="#2f86db"/><rect x="1.5" y="1.7" width="5" height="1.6" fill="#8cc4f2"/><rect x="4" y="5.7" width="3.5" height="1.2" rx="0.5" fill="#1f6aaa"/><rect x="4" y="7.7" width="3.5" height="1.2" rx="0.5" fill="#1f6aaa"/><rect x="4" y="9.7" width="3.5" height="1.2" rx="0.5" fill="#1f6aaa"/><rect x="4" y="11.7" width="3.5" height="1.6" rx="0.6" fill="#1f6aaa"/></g>
<text x="296" y="566.3500000000001" font-size="11" fill="#222">Name</text>
<text x="350.3" y="566.3500000000001" font-size="11" fill="#222">varchar(255)</text>
<g transform="translate(422.7,555.4000000000001)"><path d="M0.9 12.9 V0.9 H4.1 L7.3 6.9 V0.9 H10.3 V12.9 H7.2 L3.9 6.9 V12.9 Z" fill="#fff" stroke="#4d4540" stroke-width="1.5" stroke-linejoin="round"/></g>
<g transform="translate(279.5,571.75)"><rect x="0.5" y="0.5" width="10.5" height="14.6" rx="0.8" fill="#fff" stroke="#4f6f98" stroke-width="1"/><rect x="1" y="1" width="9.5" height="3.6" fill="#2f86db"/><rect x="1.5" y="1.7" width="5" height="1.6" fill="#8cc4f2"/><rect x="4" y="5.7" width="3.5" height="1.2" rx="0.5" fill="#1f6aaa"/><rect x="4" y="7.7" width="3.5" height="1.2" rx="0.5" fill="#1f6aaa"/><rect x="4" y="9.7" width="3.5" height="1.2" rx="0.5" fill="#1f6aaa"/><rect x="4" y="11.7" width="3.5" height="1.6" rx="0.6" fill="#1f6aaa"/></g>
<text x="296" y="583.3000000000001" font-size="11" fill="#222">Remarks</text>
<text x="350.3" y="583.3000000000001" font-size="11" fill="#222">varchar(255)</text>
<g transform="translate(422.7,572.35)"><path d="M0.9 12.9 V0.9 H4.1 L7.3 6.9 V0.9 H10.3 V12.9 H7.2 L3.9 6.9 V12.9 Z" fill="#fff" stroke="#4d4540" stroke-width="1.5" stroke-linejoin="round"/></g>
<rect x="273.5" y="521.2" width="10" height="10" fill="#F3B579"/><path d="M273.5 532.2 V521.2 H284.5" fill="none" stroke="#353535" stroke-width="1.1"/>
<path transform="translate(274.1,521.8000000000001)" d="M0.3 9.6 V0.3 H2.8 L4.75 4.9 L6.7 0.3 H9.2 V9.6 H7.3 V3.6 L5.5 7.9 H4 L2.2 3.6 V9.6 Z" fill="#000" stroke="#fff" stroke-width="1.1" stroke-linejoin="round" paint-order="stroke"/>
</svg>
<div class="a" style="left:469px;top:0;width:1px;height:620px;background:#6b6b6b"></div>
<div class="a" style="left:470px;top:1px;width:460px;height:28px;background:#fff"></div>
<svg class="a" style="left:479px;top:8px" width="12" height="12"><path d="M0.5 0.5 H8 L10.5 3 V10.5 H0.5 Z" fill="#f0f0f0" stroke="#c4c4c4"/><rect x="1" y="3.2" width="9" height="1.8" fill="#92c1ea"/><rect x="3" y="5.8" width="5" height="0.8" fill="#9a9a9a"/><rect x="3" y="6.6" width="5" height="3" fill="#a9d0f2"/></svg>
<div class="a" style="left:497.5px;top:8.5px;font-size:12px;letter-spacing:-0.5px;color:#1a1a1a;white-space:nowrap">Class Diagram - Ticket System *</div>
<div class="a" style="left:470px;top:29px;width:460px;height:50px;background:#f0f0f0"></div>
<div class="a" style="left:470px;top:50px;width:460px;height:1px;background:#f4f4f4"></div>
<div class="mi" style="left:487px">Dash</div>
<div class="mi" style="left:538px">Project</div>
<div class="mi" style="left:599px">ITSM</div>
<div class="mi" style="left:649px">UeXceler</div>
<div class="mi" style="left:717.3px">Diagram</div>
<div class="mi" style="left:782.5px">View</div>
<div class="mi" style="left:831px">Team</div>
<div class="mi" style="left:884px">Tools</div>
<svg class="a" style="left:470px;top:50px" width="130" height="30"><path d="M7.5 4.5 H101.3 L113 14.25 L101.3 24 H7.5 Z" fill="#f7f7f7" stroke="#d4d4d4" stroke-width="1"/></svg>
<div class="a" style="left:484.5px;top:57.5px;font-size:14px;color:#808080;white-space:nowrap;transform:scaleX(0.86);transform-origin:0 0">Class Diagram</div>
<div class="a" style="left:470px;top:79px;width:35px;height:515px;background:#f0f0f0"></div>
<div class="a" style="left:505px;top:79px;width:425px;height:19px;background:#f0f0f0"></div>
<div class="a" style="left:504px;top:79px;width:91px;height:17px;border:1px solid #222;border-right-width:2px;background:#fff"></div>
<div class="a" style="left:508px;top:82px;font-size:11px;letter-spacing:-0.35px;color:#222;white-space:nowrap">&lt;default package&gt;</div>
<svg class="a" style="left:600px;top:87px" width="10" height="10"><circle cx="4" cy="4" r="2.6" fill="none" stroke="#777" stroke-width="1"/><path d="M6 6 L8.5 8.5" stroke="#777" stroke-width="1"/></svg>
<div class="a" style="left:504px;top:96px;width:426px;height:2px;background:#2a2a2a"></div>
<div class="a" style="left:504px;top:98px;width:1px;height:480px;background:#9a9a9a"></div>
<div class="a" style="left:505px;top:578px;width:425px;height:15px;background:#efefef"></div>
<div class="a" style="left:665px;top:578px;width:265px;height:15px;background:#cacaca"></div>
<div class="a" style="left:504px;top:592px;width:426px;height:2px;background:#a9a9a9"></div>
<div class="a" style="left:504px;top:577px;width:6px;height:15px;background:#fff"></div>
<div class="a" style="left:509px;top:577px;width:1px;height:15px;background:#888"></div>
<div class="a" style="left:504px;top:591px;width:6px;height:1px;background:#888"></div>
<svg class="a" style="left:512px;top:580px" width="10" height="12"><path d="M7 2 L3 5.5 L7 9" fill="none" stroke="#333" stroke-width="1.6"/></svg>
<svg class="a" style="left:470px;top:79px" width="35" height="515" viewBox="470 79 35 515">
<rect x="471" y="79" width="1" height="515" fill="#e2e2e2"/>
<rect x="477.8" y="79.9" width="18.7" height="19" fill="#838383" stroke="#80B4EA" stroke-width="2"/>
<path d="M482.6 83.4 L493.3 90.5 L487.8 90.6 L483.6 96.6 Z" fill="#3ccf46" stroke="#4a6a4a" stroke-width="0.7"/>
<path d="M496.6 93 V99 H490.6 Z" fill="#111"/>
<path d="M483.6 110.8 L487.5 103.8 L491.4 110.8 Z" fill="#9a9a9a"/>
<rect x="481.6" y="118.8" width="12.4" height="14.6" fill="#4a92db" stroke="#3a7cc4" stroke-width="0.6"/>
<rect x="482.5" y="120.5" width="10.6" height="5" fill="#6f9cc9"/><rect x="483" y="122" width="9.5" height="1" fill="#5a86b4"/><rect x="482.5" y="128" width="10.6" height="1.1" fill="#2a5a8a"/>
<path d="M498 129 V136 H491 Z" fill="#111"/>
<path d="M481 150.5 L487 147 V154 Z M487 150.5 H496" fill="none" stroke="#111" stroke-width="1.2"/>
<path d="M498 152 V158 H492 Z" fill="#111"/>
<path d="M482.8 168.8 L480.8 171 L482.8 173.2 M484.8 168.8 L482.8 171 L484.8 173.2 M491.2 168.8 L493.2 171 L491.2 173.2 M493.2 168.8 L495.2 171 L493.2 173.2" fill="none" stroke="#777" stroke-width="1"/><path d="M486.3 168 V172 Q486.3 174 488 174 Q489.7 174 489.7 172 V168" fill="none" stroke="#111" stroke-width="1.5"/>
<path d="M480 176.5 H494" stroke="#333" stroke-width="1" stroke-dasharray="1.5 1"/><path d="M493 173.5 L496 176.5 L493 179" fill="none" stroke="#333" stroke-width="1"/>
<rect x="480" y="196.5" width="17" height="1.6" fill="#555"/>
<path d="M498 200 V206 H492 Z" fill="#111"/>
<path d="M487.6 215 L494.6 220.3 L487.6 225.6 L480.6 220.3 Z" fill="#6cb5f0" stroke="#4b9be2" stroke-width="0.9"/>
<rect x="481" y="237" width="14" height="1.6" fill="#555"/><path d="M488 239 V245" stroke="#333" stroke-width="1" stroke-dasharray="1 1"/><rect x="483.5" y="245.5" width="9" height="4.5" fill="#4a94dc"/><rect x="485.5" y="247.3" width="5" height="1" fill="#2a5a8a"/>
<path d="M481 268 H492" stroke="#333" stroke-width="1" stroke-dasharray="2 1.3"/><path d="M489.5 264.5 L494.5 268.5 L489.5 272" fill="none" stroke="#333" stroke-width="1.2"/>
<path d="M498 271 V277 H492 Z" fill="#111"/>
<path d="M482.8 286.3 L480.8 288.5 L482.8 290.7 M484.8 286.3 L482.8 288.5 L484.8 290.7 M491.2 286.3 L493.2 288.5 L491.2 290.7 M493.2 286.3 L495.2 288.5 L493.2 290.7" fill="none" stroke="#777" stroke-width="1"/><path d="M486.2 286.2 Q487 285 488.3 285 Q489.8 285 489.8 286.6 V291 M489.8 288.3 Q486 288.3 486 289.8 Q486 291 487.6 291 Q489 291 489.8 289.6" fill="none" stroke="#111" stroke-width="1.3"/>
<path d="M480.5 293.5 H493" stroke="#333" stroke-width="1" stroke-dasharray="2 1.3"/><path d="M490 290.5 L494.5 294 L490 297" fill="none" stroke="#333" stroke-width="1.2"/>
<path d="M498 294 V300 H492 Z" fill="#111"/>
<ellipse cx="488" cy="314.5" rx="7.8" ry="4.6" fill="#3E8BD8" stroke="#5ba0e0" stroke-width="0.8" stroke-dasharray="1.2 0.8"/>
<defs><linearGradient id="fg" x1="0" y1="0" x2="1" y2="1"><stop offset="0" stop-color="#3f88d6"/><stop offset="0.5" stop-color="#66a8e6"/><stop offset="1" stop-color="#3f88d6"/></linearGradient></defs><path d="M480 330.5 H485 L486.5 333 H497 V345.5 H480 Z" fill="url(#fg)" stroke="#3a7cc4" stroke-width="0.6"/><path d="M483.5 337 H491.5 M491 337 L489 341.5 H493.5 Z" fill="none" stroke="#1f3f66" stroke-width="0.8"/>
<rect x="480.5" y="354.5" width="15" height="14.5" rx="1.5" fill="#ececec" stroke="#555" stroke-width="1"/><rect x="480.5" y="357.5" width="15" height="1" fill="#555"/>
<path d="M480 379 H493 L496 382 V391 H480 Z" fill="#4a95de" stroke="#2a6ab0" stroke-width="0.8"/><path d="M493 379 V382 H496" fill="none" stroke="#cfe4f7" stroke-width="0.8"/><rect x="482" y="381.5" width="5" height="3" fill="#6f93b8"/><rect x="482" y="385.5" width="12" height="1" fill="#2f5f92"/><rect x="482" y="387.8" width="12" height="1" fill="#2f5f92"/>
<path d="M480 408.7 H497" stroke="#555" stroke-width="1" stroke-dasharray="1.5 1"/>
<text x="488.5" y="434" text-anchor="middle" font-size="10" font-weight="bold" fill="#111">{ }</text><path d="M480 436.5 H497" stroke="#555" stroke-width="1" stroke-dasharray="1.5 1"/>
<circle cx="483.7" cy="456.3" r="3" fill="none" stroke="#111" stroke-width="1"/><path d="M480.7 456.3 H497 M483.7 453.3 V459.3" stroke="#111" stroke-width="1"/>
<rect x="477" y="470.5" width="21" height="1.6" fill="#cfcfcf"/>
<path d="M480 479 H485 L486 481.5 H497 V494 H480 Z" fill="url(#fg)" stroke="#3a7cc4" stroke-width="0.6"/><rect x="483.5" y="484" width="9" height="1" fill="#1f3f66"/>
<path d="M498 488 V495 H491 Z" fill="#111"/>
<rect x="480" y="503" width="16" height="12" fill="#cfe3f7" stroke="#4b9be0" stroke-width="1"/><rect x="480.5" y="503.5" width="15" height="2.5" fill="#4b9be0"/><rect x="489" y="507" width="5" height="3" fill="#bbb" stroke="#889" stroke-width="0.5"/><rect x="483" y="510" width="5" height="3" fill="#bbb" stroke="#889" stroke-width="0.5"/>
<rect x="480" y="532.5" width="17" height="1.6" fill="#8a8a8a"/>
<rect x="480.5" y="552" width="16" height="11" rx="1" fill="#c6e4f8" stroke="#3b9ad8" stroke-width="1"/><rect x="480.5" y="552" width="16" height="2" fill="#2f7fb8"/>
<rect x="480" y="573" width="16" height="9" fill="#b9d3f0"/><circle cx="487" cy="580" r="3" fill="#f5e800"/><path d="M485 582 Q489.5 575 495 582 Z" fill="#2aa040"/>
<path d="M484 585.5 H493 L488.5 592 Z" fill="#333"/>
<rect x="504" y="98" width="1" height="480" fill="#9a9a9a"/>
</svg>
<svg class="a" style="left:505px;top:98px" width="425" height="480" viewBox="505 98 425 480">
<g stroke="#444" stroke-width="1.2" fill="none">
<path d="M700.3 136.5 L724.8 98 M700.3 136.5 L779.7 98"/>
<path d="M700 170.8 H810.5"/>
<path d="M700 268 H810.5"/>
<path d="M505 222.8 H551.5"/>
<path d="M625.5 300 V361.5"/>
<path d="M505 393.3 H551.5"/>
<path d="M700 513.8 H726.6 L780.5 417.5 H802.5"/>
</g>
<rect x="551.9" y="137.5" width="147.60000000000002" height="162" fill="#7ACEF4" stroke="#222" stroke-width="1.3"/>
<rect x="551.4" y="164.70000000000002" width="148.60000000000002" height="1.4" fill="#222"/>
<text x="625.7" y="148" text-anchor="middle" font-size="11" fill="#222">&lt;&lt;ORM Persistable&gt;&gt;</text>
<text x="625.7" y="162" text-anchor="middle" font-size="11" font-weight="bold" fill="#222">Staff</text>
<text x="552.9" y="178.4" font-size="11" fill="#222">-ID : int</text>
<text x="552.9" y="192.5" font-size="11" fill="#222">-firstName : String</text>
<text x="552.9" y="206.6" font-size="11" fill="#222">-address : String</text>
<text x="552.9" y="220.7" font-size="11" fill="#222">-salary : Integer</text>
<text x="552.9" y="234.8" font-size="11" fill="#222">-lastName : String</text>
<text x="552.9" y="248.9" font-size="11" fill="#222">-email : String</text>
<text x="552.9" y="263.0" font-size="11" fill="#222">-profileImage : String</text>
<text x="552.9" y="277.1" font-size="11" fill="#222">-phoneNum : String</text>
<text x="552.9" y="291.2" font-size="11" fill="#222">-timeZone : String</text>
<rect x="810.8" y="117.5" width="127.70000000000005" height="91.5" fill="#7ACEF4" stroke="#222" stroke-width="1.3"/>
<rect x="810.3" y="144.70000000000002" width="128.70000000000005" height="1.4" fill="#222"/>
<text x="874.65" y="128" text-anchor="middle" font-size="11" fill="#222">&lt;&lt;ORM Persistable&gt;&gt;</text>
<text x="874.65" y="142" text-anchor="middle" font-size="11" font-weight="bold" fill="#222">Predefined</text>
<text x="811.8" y="158.4" font-size="11" fill="#222">-ID : int</text>
<text x="811.8" y="172.5" font-size="11" fill="#222">-subject : String</text>
<text x="811.8" y="186.6" font-size="11" fill="#222">-content : String</text>
<text x="811.8" y="200.7" font-size="11" fill="#222">-importance : String</text>
<rect x="810.8" y="231.0" width="127.70000000000005" height="77.0" fill="#7ACEF4" stroke="#222" stroke-width="1.3"/>
<rect x="810.3" y="258.0" width="128.70000000000005" height="1.4" fill="#222"/>
<text x="874.65" y="241.5" text-anchor="middle" font-size="11" fill="#222">&lt;&lt;ORM Persistable&gt;&gt;</text>
<text x="874.65" y="255.5" text-anchor="middle" font-size="11" font-weight="bold" fill="#222">Report</text>
<text x="811.8" y="271.7" font-size="11" fill="#222">-ID : int</text>
<text x="811.8" y="285.8" font-size="11" fill="#222">-subject : String</text>
<text x="811.8" y="299.9" font-size="11" fill="#222">-content : String</text>
<rect x="551.9" y="361.8" width="147.60000000000002" height="63.0" fill="#7ACEF4" stroke="#222" stroke-width="1.3"/>
<rect x="551.4" y="388.6" width="148.60000000000002" height="1.4" fill="#222"/>
<text x="625.7" y="372.3" text-anchor="middle" font-size="11" fill="#222">&lt;&lt;ORM Persistable&gt;&gt;</text>
<text x="625.7" y="386.3" text-anchor="middle" font-size="11" font-weight="bold" fill="#222">Knowledge</text>
<text x="552.9" y="402.3" font-size="11" fill="#222">-ID : int</text>
<text x="552.9" y="416.40000000000003" font-size="11" fill="#222">-content : String</text>
<rect x="802.7" y="361.8" width="143.79999999999995" height="119.89999999999998" fill="#7ACEF4" stroke="#222" stroke-width="1.3"/>
<rect x="802.2" y="389.0" width="144.79999999999995" height="1.4" fill="#222"/>
<text x="874.6" y="372.3" text-anchor="middle" font-size="11" fill="#222">&lt;&lt;ORM Persistable&gt;&gt;</text>
<text x="874.6" y="386.3" text-anchor="middle" font-size="11" font-weight="bold" fill="#222">Ticket</text>
<text x="803.7" y="402.7" font-size="11" fill="#222">-ID : int</text>
<text x="803.7" y="416.8" font-size="11" fill="#222">-subject : String</text>
<text x="803.7" y="430.9" font-size="11" fill="#222">-CC : String</text>
<text x="803.7" y="445.0" font-size="11" fill="#222">-BCC : String</text>
<text x="803.7" y="459.09999999999997" font-size="11" fill="#222">-recipientFullName : String</text>
<text x="803.7" y="473.2" font-size="11" fill="#222">-state : Integer</text>
<path transform="translate(803.3,362.3)" d="M0.3 9.6 V0.3 H2.8 L4.75 4.9 L6.7 0.3 H9.2 V9.6 H7.3 V3.6 L5.5 7.9 H4 L2.2 3.6 V9.6 Z" fill="#000" stroke="#fff" stroke-width="1.1" stroke-linejoin="round" paint-order="stroke"/>
<rect x="551.9" y="468.8" width="147.60000000000002" height="77.30000000000001" fill="#7ACEF4" stroke="#222" stroke-width="1.3"/>
<rect x="551.4" y="496.3" width="148.60000000000002" height="1.4" fill="#222"/>
<text x="625.7" y="479.3" text-anchor="middle" font-size="11" fill="#222">&lt;&lt;ORM Persistable&gt;&gt;</text>
<text x="625.7" y="493.3" text-anchor="middle" font-size="11" font-weight="bold" fill="#222">Department</text>
<text x="552.9" y="510.0" font-size="11" fill="#222">-ID : int</text>
<text x="552.9" y="524.1" font-size="11" fill="#222">-name : String</text>
<text x="552.9" y="538.2" font-size="11" fill="#222">-remarks : String</text>
<text x="691.3" y="122" font-size="11" fill="#333" text-anchor="start">0..*</text>
<text x="707.4" y="124.5" font-size="11" fill="#333" text-anchor="start">staff</text>
<text x="684.2" y="133" font-size="11" fill="#333" text-anchor="start">1</text>
<text x="713.9" y="143.5" font-size="11" fill="#333" text-anchor="start">staff</text>
<text x="713.5" y="166.5" font-size="11" fill="#333" text-anchor="start">1</text>
<text x="799.5" y="166.5" font-size="11" fill="#333" text-anchor="end">predefined</text>
<text x="713" y="182" font-size="11" fill="#333" text-anchor="start">staff</text>
<text x="795.5" y="182" font-size="11" fill="#333" text-anchor="end">0..*</text>
<text x="713.5" y="265" font-size="11" fill="#333" text-anchor="start">1</text>
<text x="800" y="265" font-size="11" fill="#333" text-anchor="end">report</text>
<text x="713" y="279" font-size="11" fill="#333" text-anchor="start">staff</text>
<text x="795.5" y="279" font-size="11" fill="#333" text-anchor="end">0..*</text>
<text x="541.5" y="219" font-size="11" fill="#333" text-anchor="end">staff</text>
<text x="540.5" y="234" font-size="11" fill="#333" text-anchor="end">1</text>
<text x="611.6" y="316" font-size="11" fill="#333" text-anchor="end">staff</text>
<text x="629.5" y="316" font-size="11" fill="#333" text-anchor="start">1</text>
<text x="613" y="353" font-size="11" fill="#333" text-anchor="end">0..*</text>
<text x="633.6" y="353" font-size="11" fill="#333" text-anchor="start">knowledge</text>
<text x="540" y="388.5" font-size="11" fill="#333" text-anchor="end">knowledge</text>
<text x="535.5" y="404" font-size="11" fill="#333" text-anchor="end">0..*</text>
<text x="796.5" y="412.5" font-size="11" fill="#333" text-anchor="end">ticket</text>
<text x="796.5" y="429" font-size="11" fill="#333" text-anchor="end">0..*</text>
<text x="715.5" y="506.5" font-size="11" fill="#333" text-anchor="start">1</text>
<text x="742.5" y="511" font-size="11" fill="#333" text-anchor="start">department</text>
</svg>
</body></html>
